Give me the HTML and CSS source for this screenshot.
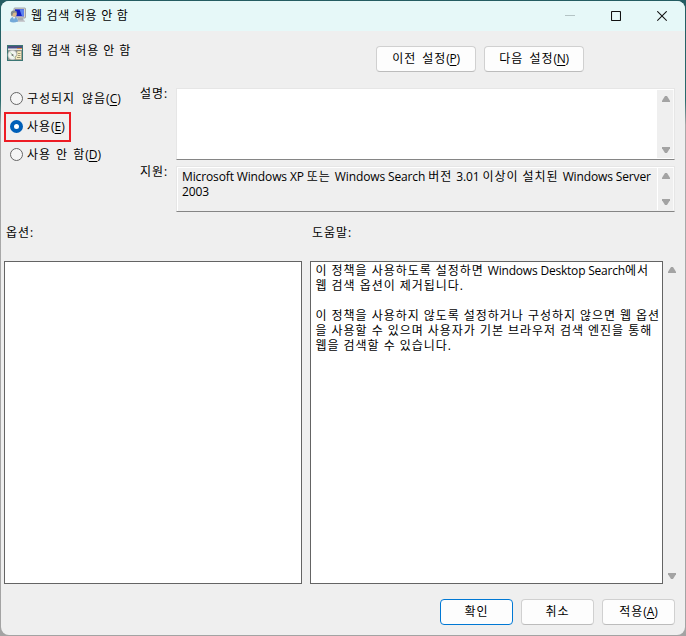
FILE: index.html
```html
<!DOCTYPE html>
<html lang="ko">
<head>
<meta charset="utf-8">
<title>웹 검색 허용 안 함</title>
<link rel="stylesheet" href="styles.css">
</head>
<body>
<div class="window">
  <header class="titlebar">
    <svg class="app-icon" width="17" height="17" viewBox="0 0 17 17">
      <rect x="5" y="1" width="11.500" height="10" rx=".8" fill="#d8d5c8" stroke="#8d9299" stroke-width=".8"/>
      <rect x="6" y="2.300" width="9" height="7" fill="#1420c4"/>
      <path d="M10.500 2.300H15V9.300H13Z" fill="#5b82ee"/>
      <path d="M9 11h5l1 3H8z" fill="#a9adb3"/><path d="M8 13.500h8v1.500H8z" fill="#c9ccd0"/>
      <path d="M.8 14.500q0-4.500 4-4.500t4.200 4.500Q4 16.500 .8 14.500z" fill="#73a9d8"/>
      <path d="M4 10l1 2.500 1.200-2.500z" fill="#eef4f8"/>
      <circle cx="5" cy="7" r="2.800" fill="#d9b88b"/>
      <path d="M2 8Q1 3.500 4.800 3.500T7.800 6Q5.500 5 4 6.500L3 9.500z" fill="#81898c"/>
    </svg>
    <h1 class="title">웹 검색 허용 안 함</h1>
    <div class="controls">
      <svg width="10" height="11" viewBox="0 0 10 11"><path d="M0 4.500h10" stroke="#b4c4c5"/></svg>
      <svg width="10" height="11" viewBox="0 0 10 11"><rect x=".5" y=".5" width="9" height="9" rx=".8" fill="none" stroke="#111" stroke-width="1.100"/></svg>
      <svg width="10" height="11" viewBox="0 0 10 11"><path d="M.3.300l9.400 9.400M9.700.300L.3 9.700" stroke="#111" stroke-width="1.100"/></svg>
    </div>
  </header>

  <section class="policy">
    <svg class="policy-icon" width="16" height="16" viewBox="0 0 16 16">
      <rect width="16" height="16" fill="#3b7674"/>
      <rect x="1" y="2" width="14" height="13" fill="#8f9490"/>
      <rect x="1" y="1" width="14" height="2" fill="#4b4e80"/>
      <path d="M1 3.500h9" stroke="#a0a3c6"/><path d="M10 3.500h5" stroke="#d98f4a"/>
      <rect x="1" y="4" width="14" height="1" fill="#e5e5df"/>
      <circle cx="5.500" cy="10" r="4.500" fill="#f2f4f0" stroke="#c3c8c4" stroke-width=".7"/>
      <path d="M5.500 10L3.500 7.500M5.500 10l2 2.500" stroke="#a5d0a5"/>
      <circle cx="5.500" cy="10" r="1" fill="#777"/>
      <path d="M10 6h4.500v8.500H8.500V11H10z" fill="#f7edc0" stroke="#8b8575" stroke-width=".5"/>
      <path d="M11 8.500h2.500M11 10.500h2.500M10 12.500h3.500" stroke="#858063" stroke-width=".8"/>
    </svg>
    <h2 class="policy-name">웹 검색 허용 안 함</h2>
    <button class="button wide">이전 설정<span class="key">(<u>P</u>)</span></button>
    <button class="button wide">다음 설정<span class="key">(<u>N</u>)</span></button>
  </section>

  <section class="state">
    <div class="radios">
      <label class="option first"><i class="radio"></i><span>구성되지 않음<span class="key">(<u>C</u>)</span></span></label>
      <label class="option marked"><i class="radio checked"></i><span>사용<span class="key">(<u>E</u>)</span></span></label>
      <label class="option last"><i class="radio"></i><span>사용 안 함<span class="key">(<u>D</u>)</span></span></label>
    </div>
    <div class="fields">
      <span class="field-label">설명:</span>
      <div class="field comment"><p></p><div class="scroll"><i class="up"></i><i class="down"></i></div></div>
      <span class="field-label">지원:</span>
      <div class="field supported">
        <p><span class="latin">Microsoft Windows XP </span>또는 <span class="latin">Windows Search </span>버전 <span class="latin">3.01 </span>이상이 설치된 <span class="latin">Windows Server<br>2003</span></p>
        <div class="scroll"><i class="up"></i><i class="down"></i></div>
      </div>
    </div>
  </section>

  <section class="details">
    <span class="panel-label">옵션:</span>
    <span class="panel-label">도움말:</span>
    <div class="panel"></div>
    <div class="panel help">
      <p>이 정책을 사용하도록 설정하면 <span class="latin">Windows Desktop Search</span>에서<br>웹 검색 옵션이 제거됩니다.</p>
      <p>이 정책을 사용하지 않도록 설정하거나 구성하지 않으면 웹 옵션<br>을 사용할 수 있으며 사용자가 기본 브라우저 검색 엔진을 통해<br>웹을 검색할 수 있습니다.</p>
    </div>
    <div class="scroll outer"><i class="up"></i><i class="down"></i></div>
  </section>

  <footer class="actions">
    <button class="button primary">확인</button>
    <button class="button">취소</button>
    <button class="button">적용<span class="key">(<u>A</u>)</span></button>
  </footer>
</div>
</body>
</html>
```
FILE: styles.css
```css
* { box-sizing: border-box; }
body {
  margin: 0;
  width: 686px;
  height: 636px;
  padding: 1px;
  overflow: hidden;
  background: linear-gradient(#245c62 0, #286b6c 100px, #a9a9a9 125px, #a3a3a3 100%);
  font: 12px/15px "Open Sans", "Noto Sans CJK KR", sans-serif;
  letter-spacing: .96px;
  color: #000;
}
h1, h2, p { margin: 0; font: inherit; }
i { display: block; }
u { text-underline-offset: 2px; }
.window {
  display: flex;
  flex-direction: column;
  width: 684px;
  height: 634px;
  border-radius: 8px;
  overflow: hidden;
  background: #efefef;
}
.titlebar {
  display: flex;
  align-items: center;
  height: 30px;
  padding: 0 18px 0 8px;
  background: #e6f8f8;
}
.app-icon { margin-top: -1px; }
.title { margin: -2px 0 0 5px; letter-spacing: .7px; }
.controls { display: flex; gap: 36px; margin-left: auto; }
.controls svg { display: block; }
.policy {
  display: flex;
  height: 57px;
  padding: 15px 0 0 6px;
}
.policy-icon { margin-top: -1px; }
.policy-name { width: 345px; margin: -3px 0 0 8px; }
.button {
  width: 73px;
  height: 26px;
  padding: 0 0 2px;
  border: 1px solid #d0d0d0;
  border-bottom-color: #bcbcbc;
  border-radius: 4px;
  background: #fdfdfd;
  color: #000;
  font: inherit;
  letter-spacing: inherit;
}
.button.wide { width: 100px; margin-right: 8px; word-spacing: 2px; }
.button.wide .key { letter-spacing: -.3px; }
.button.primary { border-color: #0078d4; }
.key { letter-spacing: 0; }
.latin { letter-spacing: -.13px; }
.help .latin { letter-spacing: -.2px; }
.state { display: flex; height: 125px; }
.radios { width: 139px; padding: 0 0 0 3px; }
.option {
  display: flex;
  align-items: center;
  gap: 4px;
  width: max-content;
  height: 26px;
  padding: 0 6px;
}
.option.first { margin-top: -3px; word-spacing: 3px; }
.option.last { margin-top: -1px; word-spacing: 1px; }
.option.marked {
  height: 30px;
  padding: 0 4px;
  margin: 1px 0 0;
  border: 2px solid #ed1c24;
}
.radio {
  width: 13px;
  height: 13px;
  border: 1px solid #666;
  border-radius: 50%;
  background: #f5f5f5;
}
.radio.checked { margin-top: -1px; border: 4px solid #005fb8; background: #fff; }
.option.marked span { margin-top: -1px; }
.fields {
  display: grid;
  grid-template-columns: 36px 499px;
  grid-template-rows: 72px 46px;
  row-gap: 6px;
}
.field-label { margin-top: -2px; }
.field {
  display: flex;
  justify-content: space-between;
  border: 1px solid #e6e6e6;
  border-bottom-color: #858585;
}
.comment { background: #fff; }
.supported p { padding: 2px 0 0 5px; white-space: nowrap; }
.supported { box-shadow: inset 1px 1px #fff; }
.scroll {
  display: flex;
  flex-direction: column;
  justify-content: space-between;
  align-items: center;
  width: 17px;
  margin: 1px 0;
  padding: 6px 0 5px 2px;
  border-right: 1px solid #fafafa;
  background: #efefef;
}
.supported .scroll { padding: 5px 0 5px 1px; border-left: 1px solid #fff; }
.up, .down {
  width: 8px;
  height: 6px;
  background: #a3a3a3;
  clip-path: polygon(38% 0, 62% 0, 100% 80%, 100% 100%, 0 100%, 0 80%);
}
.down { transform: rotate(180deg); }
.details {
  display: grid;
  grid-template-columns: 298px 353px 17px;
  grid-template-rows: 36px 323px;
  column-gap: 8px;
  padding: 12px 0 0 3px;
}
.panel-label { padding-left: 2px; }
.panel-label + .panel-label { grid-column: 2 / 4; }
.panel { border: 1px solid #646464; background: #fff; }
.help { padding: 1px 0 0 4.500px; white-space: nowrap; }
.help p + p { margin-top: 15px; }
.scroll.outer { margin: 0 0 0 -8px; border: 0; padding: 6px 0 5px 1px; }
.actions {
  display: flex;
  justify-content: flex-end;
  gap: 8px;
  padding: 15px 10px 0 0;
}
```
